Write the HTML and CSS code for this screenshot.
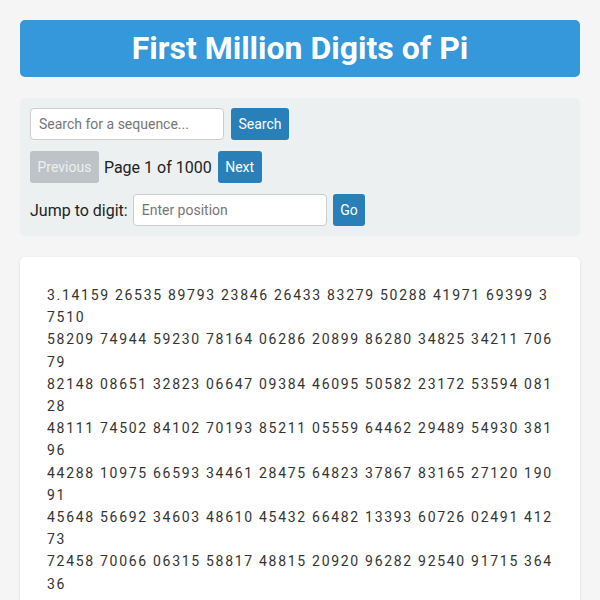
FILE: index.html
```html
<!DOCTYPE html>
<html>
<head>
<meta charset="utf-8">
<link rel="stylesheet" href="styles.css">
</head>
<body>
<header class="header"><h1 class="title">First Million Digits of Pi</h1></header>
<section class="controls">
  <div class="row">
    <input class="field" type="text" placeholder="Search for a sequence...">
    <button class="btn btn-search">Search</button>
  </div>
  <div class="row row-pager">
    <button class="btn btn-disabled">Previous</button>
    <span class="label">Page 1 of 1000</span>
    <button class="btn btn-next">Next</button>
  </div>
  <div class="row row-jump">
    <span class="label">Jump to digit:</span>
    <input class="field" type="text" placeholder="Enter position">
    <button class="btn btn-go">Go</button>
  </div>
</section>
<section class="digits">
  <div class="line">3.14159 26535 89793 23846 26433 83279 50288 41971 69399 37510</div>
  <div class="line">58209 74944 59230 78164 06286 20899 86280 34825 34211 70679</div>
  <div class="line">82148 08651 32823 06647 09384 46095 50582 23172 53594 08128</div>
  <div class="line">48111 74502 84102 70193 85211 05559 64462 29489 54930 38196</div>
  <div class="line">44288 10975 66593 34461 28475 64823 37867 83165 27120 19091</div>
  <div class="line">45648 56692 34603 48610 45432 66482 13393 60726 02491 41273</div>
  <div class="line">72458 70066 06315 58817 48815 20920 96282 92540 91715 36436</div>
  <div class="line">78925 90360 01133 05305 48820 46652 13841 46951 94151 16094</div>
</section>
</body>
</html>
```
FILE: styles.css
```css
html, body {
  margin: 0;
  padding: 0;
}
body {
  background: #f5f5f5;
  font-family: Roboto, "Liberation Sans", sans-serif;
  color: #333;
  padding: 20px 20px 0;
  height: 580px;
  overflow: hidden;
}
.header {
  background: #3498db;
  color: #fff;
  border-radius: 5px;
  padding: 10px;
  text-align: center;
  margin-bottom: 21px;
}
.title {
  margin: 0;
  font-size: 32px;
  font-weight: 700;
  line-height: 37px;
}
.controls {
  background: #ecf0f1;
  border-radius: 5px;
  padding: 10px;
  display: flex;
  flex-direction: column;
  gap: 11px;
  margin-bottom: 21px;
}
.row {
  display: flex;
  align-items: center;
  gap: 6px;
  height: 32px;
}
.row-pager {
  gap: 5px;
}
.row-jump {
  gap: 5px;
}
.field {
  box-sizing: border-box;
  width: 194px;
  height: 32px;
  border: 1px solid #ccc;
  border-radius: 4px;
  padding: 0 8px;
  font-family: Roboto, "Liberation Sans", sans-serif;
  font-size: 14px;
  color: #333;
  background: #fff;
}
.field::placeholder {
  color: #767676;
}
.btn {
  box-sizing: border-box;
  height: 32px;
  border: none;
  border-radius: 3px;
  padding: 0 7.5px;
  background: #2980b9;
  color: #fff;
  font-family: Roboto, "Liberation Sans", sans-serif;
  font-size: 14px;
}
.btn-search {
  margin-left: 1px;
}
.btn-next {
  margin-left: 1px;
}
.btn-go {
  margin-left: 1px;
}
.btn-disabled {
  background: #bdc3c7;
  color: #ecf0f1;
}
.label {
  font-size: 16px;
  color: #222;
}
.digits {
  background: #fff;
  border-radius: 5px;
  box-shadow: 0 1px 3px rgba(0,0,0,0.12);
  padding: 27px 27px;
  font-size: 14px;
  line-height: 22.2px;
  letter-spacing: 1.7px;
  color: #333;
  word-break: break-all;
}
```
